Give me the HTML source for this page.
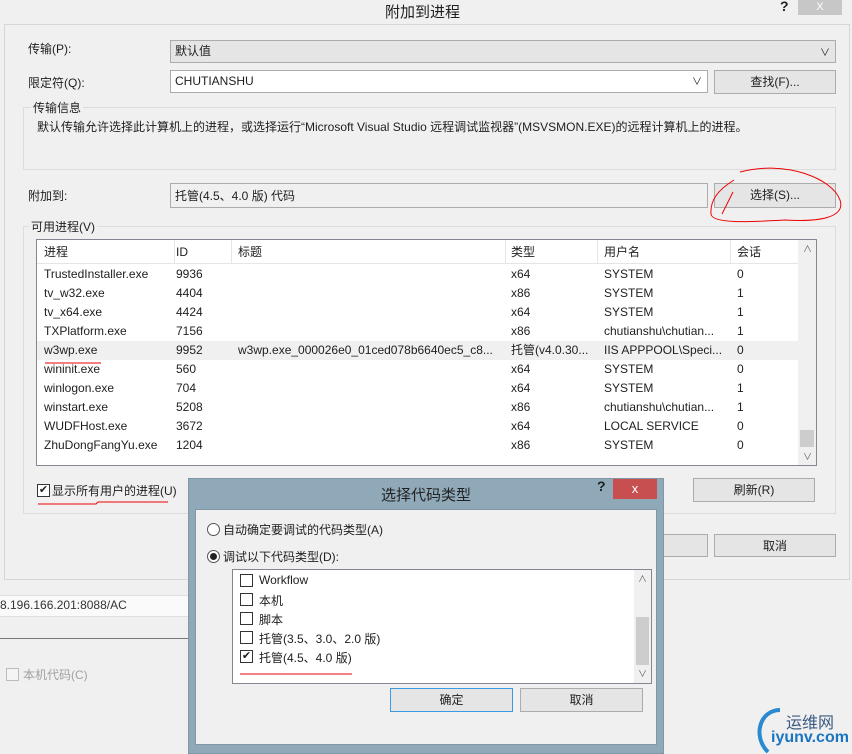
<!DOCTYPE html>
<html><head><meta charset="utf-8"><style>
*{box-sizing:border-box;margin:0;padding:0}
body{width:852px;height:754px;position:relative;overflow:hidden;background:#f0f0f0;font-family:"Liberation Sans","Noto Sans CJK SC",sans-serif;font-size:12px;color:#1e1e1e}
.a{position:absolute;white-space:nowrap}
.btn{position:absolute;background:#e5e5e5;border:1px solid #acacac;text-align:center;line-height:22px}
.row{position:absolute;left:37px;width:760px;height:19px;line-height:19px}
.row span{position:absolute}
.cb{position:absolute;width:13px;height:13px;border:1px solid #333;background:#fff}
</style></head><body>
<div class="a" style="left:0;top:0;width:852px;height:24px;background:#f0f0f0"></div>
<div class="a" style="left:385px;top:1px;font-size:15px">附加到进程</div>
<div class="a" style="left:780px;top:-2px;font-size:14px;font-weight:bold">?</div>
<div class="a" style="left:798px;top:0;width:44px;height:15px;background:#c7c7c7;color:#fff;text-align:center;font-size:11px;line-height:15px">X</div>
<div class="a" style="left:4px;top:24px;width:846px;height:556px;border:1px solid #d6d6d6;background:#f0f0f0"></div>

<div class="a" style="left:28px;top:40px">传输(P):</div>
<div class="a" style="left:170px;top:40px;width:666px;height:23px;background:#e5e5e5;border:1px solid #acacac;padding:1px 4px">默认值<span style="position:absolute;right:5px;top:3px;font-size:10px">∨</span></div>
<div class="a" style="left:28px;top:74px">限定符(Q):</div>
<div class="a" style="left:170px;top:70px;width:538px;height:23px;background:#fff;border:1px solid #acacac;padding:2px 4px;line-height:17px">CHUTIANSHU<span style="position:absolute;right:5px;top:3px;font-size:10px">∨</span></div>
<div class="btn" style="left:714px;top:70px;width:122px;height:24px">查找(F)...</div>

<div class="a" style="left:23px;top:107px;width:813px;height:63px;border:1px solid #dcdcdc"></div>
<div class="a" style="left:31px;top:99px;background:#f0f0f0;padding:0 2px">传输信息</div>
<div class="a" style="left:37px;top:118px">默认传输允许选择此计算机上的进程，或选择运行“Microsoft Visual Studio 远程调试监视器”(MSVSMON.EXE)的远程计算机上的进程。</div>

<div class="a" style="left:28px;top:187px">附加到:</div>
<div class="a" style="left:170px;top:183px;width:538px;height:25px;background:#f0f0f0;border:1px solid #acacac;padding:3px 4px">托管(4.5、4.0 版) 代码</div>
<div class="btn" style="left:714px;top:183px;width:122px;height:25px">选择(S)...</div>

<div class="a" style="left:23px;top:226px;width:813px;height:288px;border:1px solid #dcdcdc"></div>
<div class="a" style="left:29px;top:218px;background:#f0f0f0;padding:0 2px">可用进程(V)</div>
<div class="a" style="left:36px;top:239px;width:781px;height:227px;background:#fff;border:1px solid #828790"></div>
<div class="a" style="left:37px;top:240px;width:761px;height:24px;border-bottom:1px solid #e5e5e5"></div>
<div class="a" style="left:174px;top:240px;height:24px;border-left:1px solid #e5e5e5"></div>
<div class="a" style="left:231px;top:240px;height:24px;border-left:1px solid #e5e5e5"></div>
<div class="a" style="left:505px;top:240px;height:24px;border-left:1px solid #e5e5e5"></div>
<div class="a" style="left:597px;top:240px;height:24px;border-left:1px solid #e5e5e5"></div>
<div class="a" style="left:730px;top:240px;height:24px;border-left:1px solid #e5e5e5"></div>
<div class="row" style="top:243px"><span style="left:7px">进程</span><span style="left:139px">ID</span><span style="left:201px">标题</span><span style="left:474px">类型</span><span style="left:567px">用户名</span><span style="left:700px">会话</span></div>
<div class="a" style="left:798px;top:240px;width:18px;height:225px;background:#f0f0f0"></div>
<div class="a" style="left:803px;top:242px;font-size:9px;color:#606060">∧</div>
<div class="a" style="left:803px;top:450px;font-size:9px;color:#606060">∨</div>
<div class="a" style="left:800px;top:430px;width:14px;height:17px;background:#cdcdcd"></div>
<div class="a" style="left:37px;top:341px;width:761px;height:19px;background:#f0f0f0"></div>
<div class="row" style="top:265px"><span style="left:7px">TrustedInstaller.exe</span><span style="left:139px">9936</span><span style="left:474px">x64</span><span style="left:567px">SYSTEM</span><span style="left:700px">0</span></div>
<div class="row" style="top:284px"><span style="left:7px">tv_w32.exe</span><span style="left:139px">4404</span><span style="left:474px">x86</span><span style="left:567px">SYSTEM</span><span style="left:700px">1</span></div>
<div class="row" style="top:303px"><span style="left:7px">tv_x64.exe</span><span style="left:139px">4424</span><span style="left:474px">x64</span><span style="left:567px">SYSTEM</span><span style="left:700px">1</span></div>
<div class="row" style="top:322px"><span style="left:7px">TXPlatform.exe</span><span style="left:139px">7156</span><span style="left:474px">x86</span><span style="left:567px">chutianshu\chutian...</span><span style="left:700px">1</span></div>
<div class="row" style="top:341px"><span style="left:7px">w3wp.exe</span><span style="left:139px">9952</span><span style="left:201px">w3wp.exe_000026e0_01ced078b6640ec5_c8...</span><span style="left:474px">托管(v4.0.30...</span><span style="left:567px">IIS APPPOOL\Speci...</span><span style="left:700px">0</span></div>
<div class="row" style="top:360px"><span style="left:7px">wininit.exe</span><span style="left:139px">560</span><span style="left:474px">x64</span><span style="left:567px">SYSTEM</span><span style="left:700px">0</span></div>
<div class="row" style="top:379px"><span style="left:7px">winlogon.exe</span><span style="left:139px">704</span><span style="left:474px">x64</span><span style="left:567px">SYSTEM</span><span style="left:700px">1</span></div>
<div class="row" style="top:398px"><span style="left:7px">winstart.exe</span><span style="left:139px">5208</span><span style="left:474px">x86</span><span style="left:567px">chutianshu\chutian...</span><span style="left:700px">1</span></div>
<div class="row" style="top:417px"><span style="left:7px">WUDFHost.exe</span><span style="left:139px">3672</span><span style="left:474px">x64</span><span style="left:567px">LOCAL SERVICE</span><span style="left:700px">0</span></div>
<div class="row" style="top:436px"><span style="left:7px">ZhuDongFangYu.exe</span><span style="left:139px">1204</span><span style="left:474px">x86</span><span style="left:567px">SYSTEM</span><span style="left:700px">0</span></div>

<div class="cb" style="left:37px;top:484px;font-size:11px;line-height:11px;text-align:center">✔</div>
<div class="a" style="left:52px;top:482px">显示所有用户的进程(U)</div>
<div class="btn" style="left:693px;top:478px;width:122px;height:24px">刷新(R)</div>
<div class="btn" style="left:664px;top:534px;width:44px;height:23px;border-left:none"></div>
<div class="btn" style="left:714px;top:534px;width:122px;height:23px">取消</div>

<div class="a" style="left:0;top:595px;width:188px;height:22px;background:#fafafa;border-top:1px solid #e0e0e0;border-bottom:1px solid #e0e0e0;padding:2px 0;color:#333">8.196.166.201:8088/AC</div>
<div class="a" style="left:0;top:638px;width:188px;height:1px;background:#777"></div>
<div class="cb" style="left:6px;top:668px;border-color:#bbb;background:#f4f4f4"></div>
<div class="a" style="left:23px;top:666px;color:#a0a0a0">本机代码(C)</div>

<!-- sub dialog -->
<div class="a" style="left:188px;top:478px;width:476px;height:276px;background:#8fa9b8;border:1px solid #7f97a6"></div>
<div class="a" style="left:381px;top:484px;font-size:15px;color:#222">选择代码类型</div>
<div class="a" style="left:597px;top:478px;font-size:14px;font-weight:bold">?</div>
<div class="a" style="left:613px;top:479px;width:44px;height:20px;background:#c74f4f;color:#fff;text-align:center;line-height:20px;font-size:13px">x</div>
<div class="a" style="left:195px;top:509px;width:462px;height:236px;background:#f0f0f0;border:1px solid #7f97a6"></div>
<div class="a" style="left:207px;top:523px;width:13px;height:13px;border:1px solid #555;border-radius:50%;background:#fff"></div>
<div class="a" style="left:223px;top:521px">自动确定要调试的代码类型(A)</div>
<div class="a" style="left:207px;top:550px;width:13px;height:13px;border:1px solid #555;border-radius:50%;background:#fff"></div>
<div class="a" style="left:210px;top:553px;width:7px;height:7px;border-radius:50%;background:#222"></div>
<div class="a" style="left:223px;top:548px">调试以下代码类型(D):</div>
<div class="a" style="left:232px;top:569px;width:420px;height:115px;background:#fff;border:1px solid #828790"></div>
<div class="a" style="left:634px;top:570px;width:17px;height:113px;background:#f0f0f0"></div>
<div class="a" style="left:638px;top:572px;font-size:9px;color:#606060">∧</div>
<div class="a" style="left:638px;top:667px;font-size:9px;color:#606060">∨</div>
<div class="a" style="left:636px;top:617px;width:13px;height:48px;background:#cdcdcd"></div>
<div class="cb" style="left:240px;top:574px"></div><div class="a" style="left:259px;top:573px">Workflow</div>
<div class="cb" style="left:240px;top:593px"></div><div class="a" style="left:259px;top:592px">本机</div>
<div class="cb" style="left:240px;top:612px"></div><div class="a" style="left:259px;top:611px">脚本</div>
<div class="cb" style="left:240px;top:631px"></div><div class="a" style="left:259px;top:630px">托管(3.5、3.0、2.0 版)</div>
<div class="cb" style="left:240px;top:650px;font-size:11px;line-height:11px;text-align:center">✔</div><div class="a" style="left:259px;top:649px">托管(4.5、4.0 版)</div>
<div class="btn" style="left:390px;top:688px;width:123px;height:24px;border-color:#3c9ae0">确定</div>
<div class="btn" style="left:520px;top:688px;width:123px;height:24px">取消</div>

<!-- watermark -->
<div class="a" style="left:786px;top:709px;font-size:16px;color:#3a5a80">运维网</div>
<div class="a" style="left:771px;top:729px;font-size:16px;color:#1a75c0;font-weight:bold">iyunv.com</div>
<svg class="a" style="left:750px;top:706px" width="40" height="48"><path d="M30 4 C10 4 2 30 18 46" stroke="#2a8ad0" stroke-width="4" fill="none"/></svg>

<svg class="a" style="left:0;top:0" width="852" height="754">
<g stroke="#e00" fill="none" stroke-width="1">
<path d="M740 172 C785 160 832 178 840 200 C846 218 818 222 785 220 C750 222 712 224 711 214 C710 200 718 190 734 180"/>
<path d="M722 214 L733 192"/>
<path d="M45 363 L101 363"/>
<path d="M38 504 L96 504 L98 502 L168 502"/>
<path d="M240 674 L352 674"/>
</g></svg>
</body></html>
